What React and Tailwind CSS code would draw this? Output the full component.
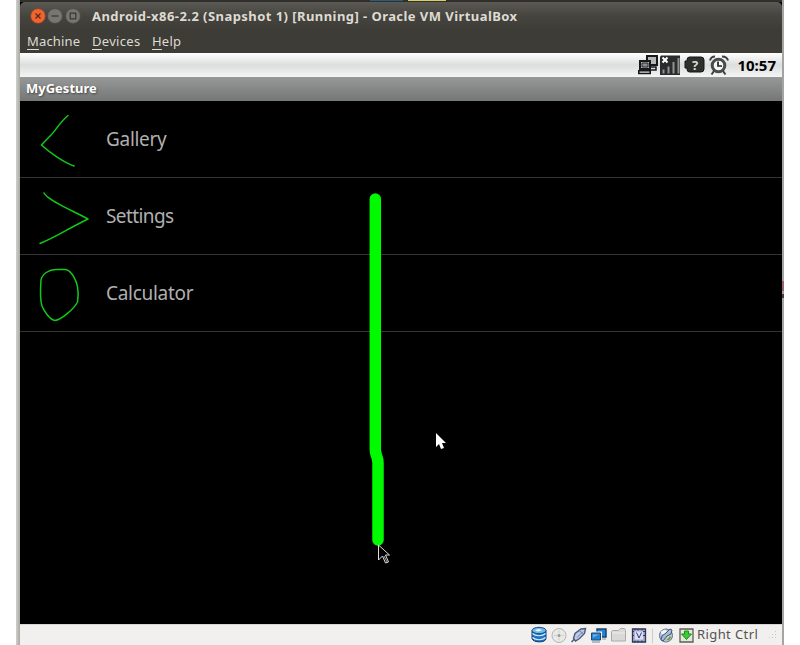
import React from "react";

const rows = [
  { name: "Gallery", text: "tracking-[-0.3px]", shape: "M48 14.500C40 21 36 29 31 34Q25 40 21.500 44C30 52 45 62 54 65" },
  { name: "Settings", text: "tracking-[-0.6px]", shape: "M24 15C28 23 56 34 68 41L62 44C46 52 36 59 20 65.500" },
  { name: "Calculator", text: "tracking-[-0.3px]", shape: "M21 25C22 19 29 14.500 36 14.500H46C52 16 57 27 57.500 32Q59 39 57.500 47C54 54 41 65 35 65.500C30 65 24 56 22 51C20 45 20.500 32 21 25" },
];

function WindowButton({ type }) {
  const close = type === "close";
  return (
    <svg className="h-4 w-4" viewBox="0 0 16 16" fill="none">
      <circle cx="8" cy="8" r="7.300" fill={close ? "#ee6530" : "#777670"} stroke={close ? "#9e4523" : "#52504a"} strokeWidth=".7" />
      <path d={close ? "M5.500 5.500l5 5m0-5l-5 5" : type === "min" ? "M4.500 8h7" : "M5.200 5.200h5.600v5.600H5.200z"} stroke={close ? "#60250f" : "#383733"} strokeWidth="1.200" />
    </svg>
  );
}

function StatusIcons() {
  return (
    <svg className="h-6 w-[96px] shrink-0" viewBox="0 0 96 24" fill="none">
      <g fill="#b4b6b7" stroke="#17181a" strokeWidth="2">
        <path d="M9 3h10v9H9z" />
        <path d="M10 14h8v3h-8z" fill="#ddd" strokeWidth="1.500" />
        <path d="M2 8h10v8H2z" />
        <path d="M.8 17.800h11.400v2.700H.8z" fill="#ddd" strokeWidth="1.600" />
      </g>
      <path d="M4 10h6v4H4z" fill="#8b8d8e" stroke="#292b2d" />
      <path d="M23 2.500h19V22H22V4z" fill="#292b2c" />
      <path d="M24.500 4.500l5 5m0-5l-5 5" stroke="#fff" strokeWidth="2" />
      <path d="M24.500 20.500v-4h2v4m3 0v-7h2v7m3 0V9h2v11.500m3 0V5h2v15.500" fill="#8f9192" />
      <path d="M51.500 4H63q3 0 3 3v9q0 3-3 3H51.500q-2.500 0-2.500-3v-1h-2V8h2V7q0-3 2.500-3z" fill="#2e302e" stroke="#151716" />
      <text x="57" y="16.500" textAnchor="middle" fill="#dcddd5" fontFamily="'Noto Sans', sans-serif" fontWeight="700" fontSize="13">?</text>
      <circle cx="80.500" cy="12.500" r="6.300" fill="#f4f5f5" stroke="#484b4d" strokeWidth="3" />
      <path d="M80 8.500v4.500h4" stroke="#222" strokeWidth="1.700" />
      <path d="M72 7.500q1-4 5-4m7 0q5 0 6 4M76 18l-2.500 3.500m11.500-3.500l2.500 3.500" stroke="#3c3f41" strokeWidth="2" />
    </svg>
  );
}

function DeviceIcons() {
  return (
    <svg className="h-[21px] w-[165px] shrink-0" viewBox="530 624.500 165 21" fill="none">
      <path d="M532 630v8c1 4.500 14 4.500 14 0v-8" fill="#2274c3" stroke="#183b6a" />
      <ellipse cx="539" cy="630" rx="7" ry="3.200" fill="#72b9e9" stroke="#174c83" />
      <path d="M532.500 633c3 3 10 3 13 0m-13 4c3 3 10 3 13 0" stroke="#d5edff" strokeWidth="1.200" />
      <path d="M535 630q4-3 7 0l-4 1z" fill="#e7f6ff" />
      <circle cx="559" cy="635" r="7" fill="#e9e9e7" stroke="#b4b4b2" />
      <path d="M559 630v3m0 4v3m-5-5h3m4 0h3" stroke="#d0d0ce" />
      <circle cx="559" cy="635" r="1.500" fill="#999" />
      <path d="M573.500 638l1.500-5 6-4.500 4.500-.5-1 5-5 5-4 2.500zM574 639l-2.500 2.500" fill="#c0cae9" stroke="#4b5879" strokeWidth="1.400" />
      <path d="M577 637l6-6M579 630l4 3" stroke="#7280b3" />
      <path d="M597 628.500h9v8h-9z" fill="#2384d4" stroke="#1a416d" strokeWidth="1.500" />
      <path d="M600 638.500h6" stroke="#8296aa" />
      <path d="M591.500 632.500h9v7h-9z" fill="#2384d4" stroke="#edf2f8" strokeWidth="3" />
      <path d="M591.500 632.500h9v7h-9z" fill="#2384d4" stroke="#294366" />
      <path d="M593 634h6l-6 3z" fill="#67b5ee" />
      <path d="M592 641.500h8" stroke="#768a9d" />
      <path d="M611.500 631l1-1h6l2-2h4l1 2v10.500h-14z" fill="#d9d9d7" stroke="#aaaaa8" />
      <path d="M612 632.500h13" stroke="#eee" />
      <path d="M632.500 628.500h13v13h-13z" fill="#aaaed8" stroke="#303754" strokeWidth="1.300" />
      <path d="M635 628v2m3-2v2m4-2v2m-7 10v2m3-2v2m4-2v2m-10-11h2m9 0h3m-14 4h2m9 0h3" stroke="#303754" />
      <path d="M635 631h8v8h-8z" fill="#dedff3" />
      <path d="M636.500 632l2.500 5.500 2.500-5.500" stroke="#343e70" />
      <path d="M652.500 628v15" stroke="#ccc" />
      <circle cx="666" cy="635" r="6.500" fill="#b7c6da" stroke="#5f6f8b" />
      <path d="M661 631l4-2 2 2-3 3-3-1zM668 636l3-1-2 5-3 1z" fill="#f1f5f7" />
      <path d="M670 628.500l2 1-1 4-4 2-4 5-2-1 1-4 4-3z" fill="#aabbd5" stroke="#405477" />
      <path d="M666 640l4-5 1 2-2 3z" fill="#789b48" />
      <path d="M680 628.500h13v13h-13z" fill="#e2e8de" stroke="#596052" strokeWidth="1.300" />
      <path d="M684.500 630.500h4v3h3L686.500 639l-5-5.500h3z" fill="#35cf31" stroke="#27851f" />
    </svg>
  );
}

export default function App() {
  return (
    <main className="relative flex h-[645px] w-[800px] overflow-hidden bg-white font-['Noto_Sans',sans-serif]">
      <div className="w-4 shrink-0" />
      <div className="w-1 shrink-0 bg-linear-to-r from-[#cfcfcb] to-[#a9aaa4]" />
      <div className="flex w-[762px] shrink-0 flex-col bg-black">
        <div className="flex h-[2px] shrink-0 bg-[#302f2b]">
          <div className="ml-[350px] mr-[5px] h-px w-[33px] bg-[#21617a]" />
          <div className="h-px w-[38px] bg-[#d7cf65]" />
        </div>
        <header className="flex h-7 shrink-0 items-center rounded-t-[5px] bg-linear-to-b from-[#5a5953] via-[#45443f] to-[#3d3c37] pl-[9.500px]">
          <div className="flex gap-[1.500px]">
            <WindowButton type="close" /><WindowButton type="min" /><WindowButton type="max" />
          </div>
          <h1 className="ml-[11.500px] whitespace-nowrap text-[13px] leading-5 font-bold tracking-[0.44px] text-[#dedbd2]">Android-x86-2.2 (Snapshot 1) [Running] - Oracle VM VirtualBox</h1>
        </header>
        <nav className="flex h-[23px] shrink-0 items-center bg-[#3d3c37] pb-[2px] pl-[7px] text-[13px] leading-5 text-[#dedbd2]">
          <span className="w-[65px] tracking-[0.15px]"><u className="underline-offset-[3px]">M</u>achine</span>
          <span className="w-[60px] tracking-[0.3px]"><u className="underline-offset-[3px]">D</u>evices</span>
          <span className="tracking-[0.2px]"><u className="underline-offset-[3px]">H</u>elp</span>
        </nav>
        <div className="flex h-6 shrink-0 justify-end bg-linear-to-b from-white via-[#dcdddd] to-[#f5f5f5] pr-[6px]">
          <StatusIcons />
          <time className="ml-[3px] text-[15px] leading-6 font-bold text-black">10:57</time>
        </div>
        <div className="flex h-6 shrink-0 items-center bg-linear-to-b from-[#979998] to-[#757776] pl-[6px] text-[13px] font-bold text-white [text-shadow:1px_1px_2px_#444]">MyGesture</div>
        <section className="flex h-[523px] shrink-0 flex-col">
          {rows.map((row) => (
            <div key={row.name} className="flex h-[77px] items-center border-b border-[#333]">
              <svg className="h-[76px] w-[86px] shrink-0" viewBox="0 0 86 76" fill="none">
                <path d={row.shape} stroke="#10c919" strokeWidth="1.500" strokeLinecap="round" strokeLinejoin="round" />
              </svg>
              <span className={`text-[19px] leading-6 text-[#b0b0b0] ${row.text}`}>{row.name}</span>
            </div>
          ))}
        </section>
        <footer className="flex h-[21px] shrink-0 items-center border-t border-[#d8d4d0] bg-[#f1f0ee] pl-[510px] text-[13px] text-[#55534e]">
          <DeviceIcons /><span className="ml-[2px] whitespace-nowrap tracking-[0.4px]">Right Ctrl</span>
          <svg className="ml-auto mr-1 h-[11px] w-[11px]" viewBox="0 0 11 11">
            <path d="M8 1h1v1H8zM5 4h1v1H5zM8 4h1v1H8zM2 7h1v1H2zM5 7h1v1H5zM8 7h1v1H8z" fill="#cbc8c4" />
          </svg>
        </footer>
      </div>
      <div className="flex w-[2px] shrink-0 flex-col bg-[#a4a4a2]">
        <div className="mt-[281px] h-[10px] bg-[#986575]" /><div className="mt-[3px] h-1 bg-[#4b3d48]" />
      </div>
      <svg className="absolute left-[350px] top-[180px] h-[400px] w-[110px]" viewBox="350 180 110 400" fill="none">
        <path d="M375.300 199V449C375.300 456 378 456 378 463V540" stroke="#00fa00" strokeWidth="11.500" strokeLinecap="round" strokeLinejoin="round" />
        <path d="M436 433v14l3-3 2 5 3-1-2-5h4z" fill="#fff" />
        <path d="M378.500 545v15l4-4 3 7 3-1-3-7h4z" fill="#000" stroke="#ddd" />
        <path d="M384 556l3 6" stroke="#aaa" />
      </svg>
    </main>
  );
}
